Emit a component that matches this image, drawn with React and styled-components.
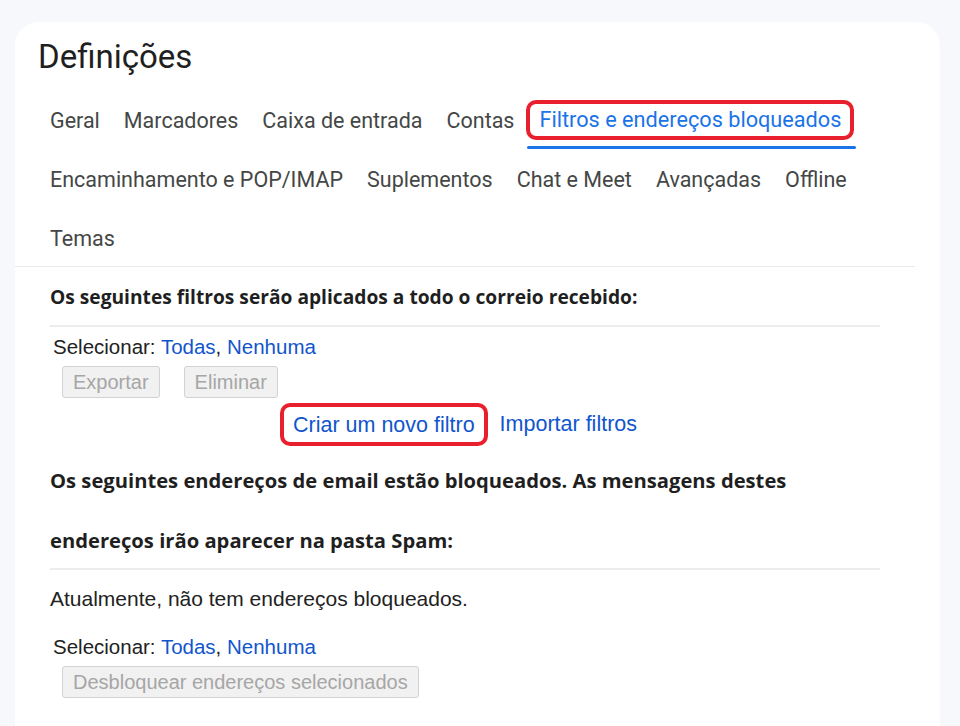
import React from 'react'
import styled, { createGlobalStyle } from 'styled-components'

const GlobalStyle = createGlobalStyle`
  html, body {
    margin: 0;
    padding: 0;
    background: #f6f8fc;
    font-family: Roboto, "Liberation Sans", sans-serif;
  }
`

const tabsTop = ['Geral', 'Marcadores', 'Caixa de entrada', 'Contas']
const tabsMore = ['Encaminhamento e POP/IMAP', 'Suplementos', 'Chat e Meet', 'Avançadas', 'Offline']

function App() {
  return (
    <Page>
      <GlobalStyle />
      <Card>
        <Title>Definições</Title>
        <Tabs>
          <TabRow>
            {tabsTop.map((t) => (
              <Tab key={t}>{t}</Tab>
            ))}
            <ActiveTab>
              <Highlight>Filtros e endereços bloqueados</Highlight>
            </ActiveTab>
          </TabRow>
          <TabRow>
            {tabsMore.map((t) => (
              <Tab key={t}>{t}</Tab>
            ))}
          </TabRow>
          <TabRow>
            <Tab>Temas</Tab>
          </TabRow>
        </Tabs>
        <Content>
          <Heading>Os seguintes filtros serão aplicados a todo o correio recebido:</Heading>
          <Rule />
          <Select>
            Selecionar: <Link>Todas</Link>, <Link>Nenhuma</Link>
          </Select>
          <Buttons>
            <Button disabled>Exportar</Button>
            <Button disabled>Eliminar</Button>
          </Buttons>
          <Actions>
            <Highlight $small>
              <Link>Criar um novo filtro</Link>
            </Highlight>
            <Link>Importar filtros</Link>
          </Actions>
          <Heading $tall>
            Os seguintes endereços de email estão bloqueados. As mensagens destes
            <br />
            endereços irão aparecer na pasta Spam:
          </Heading>
          <Rule />
          <Plain>Atualmente, não tem endereços bloqueados.</Plain>
          <Select $gap>
            Selecionar: <Link>Todas</Link>, <Link>Nenhuma</Link>
          </Select>
          <Buttons>
            <Button disabled>Desbloquear endereços selecionados</Button>
          </Buttons>
        </Content>
      </Card>
    </Page>
  )
}

const Page = styled.div`
  height: 726px;
  overflow: hidden;
  padding: 22px 20px 0 15px;
  box-sizing: border-box;
`

const Card = styled.div`
  background: #fff;
  border-radius: 24px 24px 0 0;
  height: 100%;
  padding: 15px 0 0 0;
  box-sizing: border-box;
`

const Title = styled.h1`
  margin: 0 0 0 23px;
  font-size: 33px;
  font-weight: 400;
  color: #1f1f1f;
  line-height: 40px;
`

const Tabs = styled.div`
  margin-top: 23px;
  padding-left: 35px;
  border-bottom: 1px solid #e9e9e9;
  margin-right: 25px;
`

const TabRow = styled.div`
  display: flex;
  align-items: center;
  gap: 24px;
  height: 40px;
  & + & {
    margin-top: 19px;
  }
  &:last-child {
    margin-bottom: 8px;
  }
`

const Tab = styled.span`
  font-size: 21.5px;
  color: #444746;
  white-space: nowrap;
`

const ActiveTab = styled.div`
  position: relative;
  margin-left: -12px;
  &::after {
    content: '';
    position: absolute;
    left: 1px;
    right: -2px;
    bottom: -9px;
    height: 3px;
    background: #1a73e8;
    border-radius: 2px;
  }
  span {
    color: #1a73e8;
    font-size: 21.7px;
  }
`

const Highlight = styled.span`
  display: inline-block;
  border: 4px solid #e8202e;
  border-radius: 10px;
  padding: ${(p) => (p.$small ? '3.5px 9px' : '2px 9px')};
  white-space: nowrap;
  line-height: 28px;
`

const Content = styled.div`
  padding: 12px 35px 0 35px;
  margin-right: 25px;
`

const Heading = styled.div`
  font-family: "Open Sans", Roboto, sans-serif;
  font-weight: 700;
  font-size: ${(p) => (p.$tall ? '20.2px' : '19.2px')};
  color: #1f1f1f;
  line-height: ${(p) => (p.$tall ? '60px' : '36px')};
  padding-bottom: ${(p) => (p.$tall ? '0' : '10px')};
  margin-top: ${(p) => (p.$tall ? '4px' : '0')};
  margin-bottom: ${(p) => (p.$tall ? '-2px' : '0')};
  white-space: nowrap;
`

const Rule = styled.div`
  height: 2px;
  background: #ececec;
`

const Select = styled.div`
  font-family: "Liberation Sans", Arial, sans-serif;
  font-size: 20.5px;
  color: #222;
  padding-left: 3px;
  margin-top: ${(p) => (p.$gap ? '24px' : '8px')};
  line-height: 24px;
`

const Link = styled.span`
  color: #1155cc;
  cursor: pointer;
`

const Buttons = styled.div`
  display: flex;
  gap: 24px;
  padding-left: 12px;
  margin-top: 7px;
`

const Button = styled.button`
  font-family: "Liberation Sans", Arial, sans-serif;
  font-size: 20px;
  color: #a6a6a6;
  background: #f1f1f1;
  border: 1px solid #d2d2d2;
  border-radius: 3px;
  height: 32px;
  padding: 0 10px;
`

const Actions = styled.div`
  display: flex;
  align-items: center;
  gap: 12px;
  padding-left: 230px;
  margin-top: 5px;
  font-family: "Liberation Sans", Arial, sans-serif;
  font-size: 21.5px;
  & > span:first-child span {
    color: #1155cc;
  }
`

const Plain = styled.div`
  font-family: "Liberation Sans", Arial, sans-serif;
  font-size: 21px;
  color: #222;
  margin-top: 17px;
`

export default App
